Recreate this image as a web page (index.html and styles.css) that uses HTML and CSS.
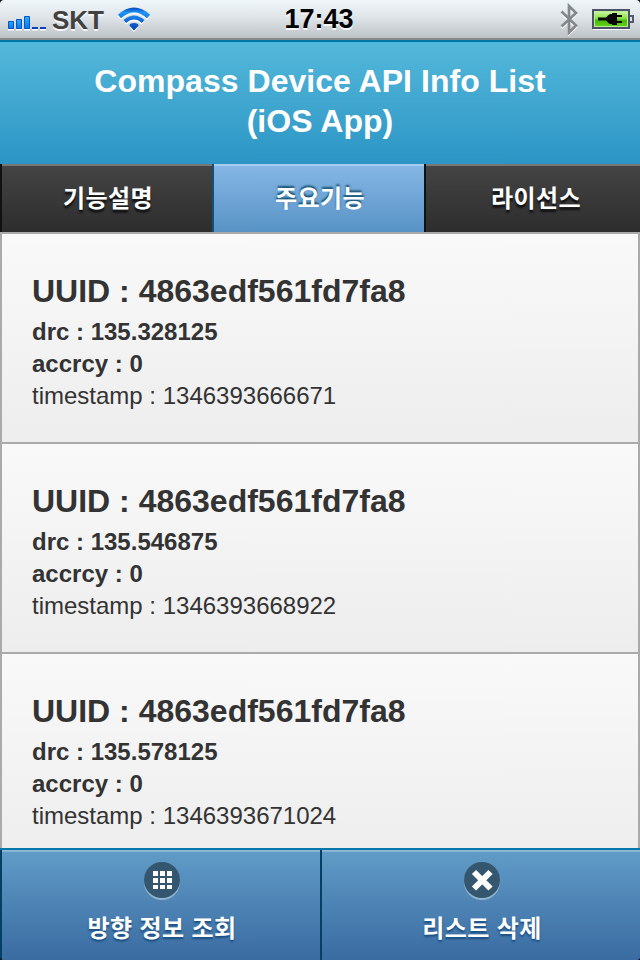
FILE: index.html
```html
<!DOCTYPE html>
<html lang="ko">
<head>
<meta charset="utf-8">
<title>Compass Device API Info List</title>
<link rel="stylesheet" href="styles.css">
</head>
<body>
<div class="screen">
  <div class="status">
    <div class="status-left">
      <svg class="signal" width="40" height="20" viewBox="0 0 40 20">
        <defs>
          <linearGradient id="bar" x1="0" y1="0" x2="0" y2="1"><stop offset="0" stop-color="#28adf5"/><stop offset="1" stop-color="#0875ec"/></linearGradient>
        </defs>
        <path d="M0 18h6v1.500h-6zM8 18h6v1.500h-6zM16 18h6v1.500h-6zM24 18h6v1.500h-6zM32 18h6v1.500h-6z" fill="#fff"/>
        <g fill="url(#bar)" stroke="#0754c9" stroke-width="1"><path d="M.5 10.500h5v7h-5z"/><path d="M8.500 8.500h5v9h-5z"/><path d="M16.500 5.500h5v12h-5z"/></g>
        <path d="M24 16h6v2h-6zM32 16h6v2h-6z" fill="#0b42b9"/>
      </svg>
      <span class="carrier">SKT</span>
      <svg class="wifi" width="34" height="26" viewBox="0 0 34 26">
        <defs>
          <linearGradient id="wave" gradientUnits="userSpaceOnUse" x1="0" y1="1" x2="0" y2="24"><stop offset="0" stop-color="#0a4cc4"/><stop offset=".2" stop-color="#2196f3"/><stop offset=".5" stop-color="#1671e2"/><stop offset="1" stop-color="#0637ad"/></linearGradient>
        </defs>
        <g fill="none" stroke="#fff" transform="translate(0 1.500)"><path d="M2.500 9.500Q17-3 31.500 9.500" stroke-width="4.500"/><path d="M8 14.500Q17 7 26 14.500" stroke-width="4"/><path d="M17 23.500L12.500 18.500Q17 14.500 21.500 18.500z" fill="#fff" stroke="none"/></g>
        <g fill="none" stroke="url(#wave)"><path d="M2.500 9.500Q17-3.500 31.500 9.500" stroke-width="4.600"/><path d="M7.800 14.500Q17 6.500 26.200 14.500" stroke-width="4"/><path d="M17 23.500L12.500 18.700Q12.500 16 17 16T21.500 18.700z" fill="url(#wave)" stroke="none"/></g>
      </svg>
    </div>
    <div class="clock">17:43</div>
    <div class="status-right">
      <svg width="20" height="34" viewBox="0 0 20 34">
        <path d="M1.500 10L16 24L9 31V4L16 11L1.500 25" fill="none" stroke="#fff" stroke-width="2.500" transform="translate(0 1)"/>
        <path d="M1.500 9.500L16 23.500L9 30.500V4L16 11L1.500 24.500" fill="none" stroke="#85888b" stroke-width="2.700"/>
      </svg>
      <svg class="battery" width="43" height="22" viewBox="0 0 43 22">
        <defs>
          <linearGradient id="charge" x1="0" y1="0" x2="0" y2="1"><stop offset="0" stop-color="#c4f59c"/><stop offset=".45" stop-color="#8be043"/><stop offset=".6" stop-color="#4bb80c"/><stop offset="1" stop-color="#5fd01a"/></linearGradient>
        </defs>
        <path d="M1 20.500h37" stroke="#fff"/>
        <path d="M38 7h3v6h-3" fill="#dce2e5" stroke="#535a70" stroke-width="2"/>
        <path d="M1 1h36v18H1z" fill="#b8ee8e" stroke="#4d5069" stroke-width="2"/>
        <path d="M3 3h32v14H3z" fill="url(#charge)"/>
        <path d="M6 8.500h8q2-2.500 4-3.500h2v-1h5v2h5v2h-5v4h5v2h-5v2h-5v-1h-2q-2-1-4-3.500H6z" fill="#050805"/>
      </svg>
    </div>
  </div>
  <header class="header"><h1>Compass Device API Info List<br>(iOS App)</h1></header>
  <nav class="tabs">
    <div class="tab">기능설명</div>
    <div class="tab active">주요기능</div>
    <div class="tab">라이선스</div>
  </nav>
  <main class="list">
    <section class="item">
      <h2>UUID : 4863edf561fd7fa8</h2>
      <p class="strong">drc : 135.328125</p>
      <p class="strong">accrcy : 0</p>
      <p>timestamp : 1346393666671</p>
    </section>
    <section class="item">
      <h2>UUID : 4863edf561fd7fa8</h2>
      <p class="strong">drc : 135.546875</p>
      <p class="strong">accrcy : 0</p>
      <p>timestamp : 1346393668922</p>
    </section>
    <section class="item">
      <h2>UUID : 4863edf561fd7fa8</h2>
      <p class="strong">drc : 135.578125</p>
      <p class="strong">accrcy : 0</p>
      <p>timestamp : 1346393671024</p>
    </section>
  </main>
  <footer class="actions">
    <div class="action">
      <svg width="36" height="38" viewBox="0 0 36 38">
        <circle cx="18" cy="20" r="18" fill="#91b5d1"/>
        <circle cx="18" cy="18" r="18" fill="#34576f"/>
        <path d="M9 9h5v5H9zM16 9h5v5h-5zM23 9h5v5h-5zM9 16h5v5H9zM16 16h5v5h-5zM23 16h5v5h-5zM9 23h5v4H9zM16 23h5v4h-5zM23 23h5v4h-5z" fill="#fff"/>
      </svg>
      <span>방향 정보 조회</span>
    </div>
    <div class="action">
      <svg width="36" height="38" viewBox="0 0 36 38">
        <circle cx="18" cy="20" r="18" fill="#91b5d1"/>
        <circle cx="18" cy="18" r="18" fill="#34576f"/>
        <path d="M10 10L26.500 26.500M26.500 10L10 26.500" stroke="#fff" stroke-width="6"/>
      </svg>
      <span>리스트 삭제</span>
    </div>
  </footer>
</div>
</body>
</html>
```
FILE: styles.css
```css
* { box-sizing: border-box; }
body { margin: 0; background: #000; font-family: "Liberation Sans", "Noto Sans CJK KR", sans-serif; color: #333; }
h1, h2, p { margin: 0; }
svg { display: block; flex: none; }
.screen { width: 640px; height: 960px; display: flex; flex-direction: column; overflow: hidden; border-radius: 4px 4px 3px 3px; }
.status { flex: none; height: 40px; display: grid; grid-template-columns: 1fr auto 1fr; align-items: start; background: linear-gradient(#eff6f9 0, #dfe5e8 45%, #bcc2c5 100%); border-bottom: 2px solid #858989; }
.status-left { display: flex; padding-left: 8px; }
.signal { margin-top: 11px; }
.carrier { margin-left: 4px; font-size: 26px; line-height: 40px; font-weight: bold; color: #414141; text-shadow: 0 2px 0 #f5f7f8; }
.wifi { margin: 7px 0 0 13px; }
.clock { padding-right: 2px; font-size: 27px; line-height: 39px; font-weight: bold; color: #000; text-shadow: 0 2px 0 #f5f7f8; }
.status-right { display: flex; justify-content: flex-end; padding: 2px 5px 0 0; }
.battery { margin: 7px 0 0 12px; }
.header { flex: none; height: 124px; padding-top: 19px; border-top: 2px solid #0077a9; background: linear-gradient(#54b8da, #2c95c5); text-align: center; color: #fff; }
h1 { font-size: 32px; line-height: 40px; letter-spacing: .03px; }
.tabs { flex: none; height: 68px; display: grid; grid-template-columns: 212px 212px 1fr; }
.tab { padding-left: 2px; border-left: 2px solid #111; background: linear-gradient(#777 2px, #444 2px, #2d2d2d); color: #fff; font-family: "Noto Sans CJK KR", sans-serif; font-weight: bold; font-size: 24px; line-height: 66px; letter-spacing: .4px; text-align: center; text-shadow: 0 3px 2px #111; }
.tab.active { border-left-color: #145072; background: linear-gradient(#a5ccec 2px, #85b6e5 2px, #5893c5); text-shadow: 0 -2px 2px #145072; }
.tab:last-child { padding-left: 6px; }
.list { flex: none; height: 616px; overflow: hidden; border: solid #aaa; border-width: 2px 2px 0; }
.item { height: 210px; padding: 37px 30px 0; border-bottom: 2px solid #aaa; background: linear-gradient(#f9f9f9, #ededed); }
h2 { font-size: 32px; line-height: 40px; margin-bottom: 5px; }
p { font-size: 24px; line-height: 32px; }
.strong { font-weight: bold; }
.actions { flex: none; height: 112px; display: flex; border-top: 2px solid #0077a9; }
.action { flex: 1; padding: 12px 0 0 2px; display: flex; flex-direction: column; align-items: center; border-left: 2px solid #044062; background: linear-gradient(#8bb5d5 2px, #609bc7 2px, #3a6ba1); color: #fff; }
.action span { margin-top: 9px; font-family: "Noto Sans CJK KR", sans-serif; font-weight: bold; font-size: 24px; line-height: 36px; letter-spacing: .4px; text-shadow: 0 2px 2px #194b7e; }
```
